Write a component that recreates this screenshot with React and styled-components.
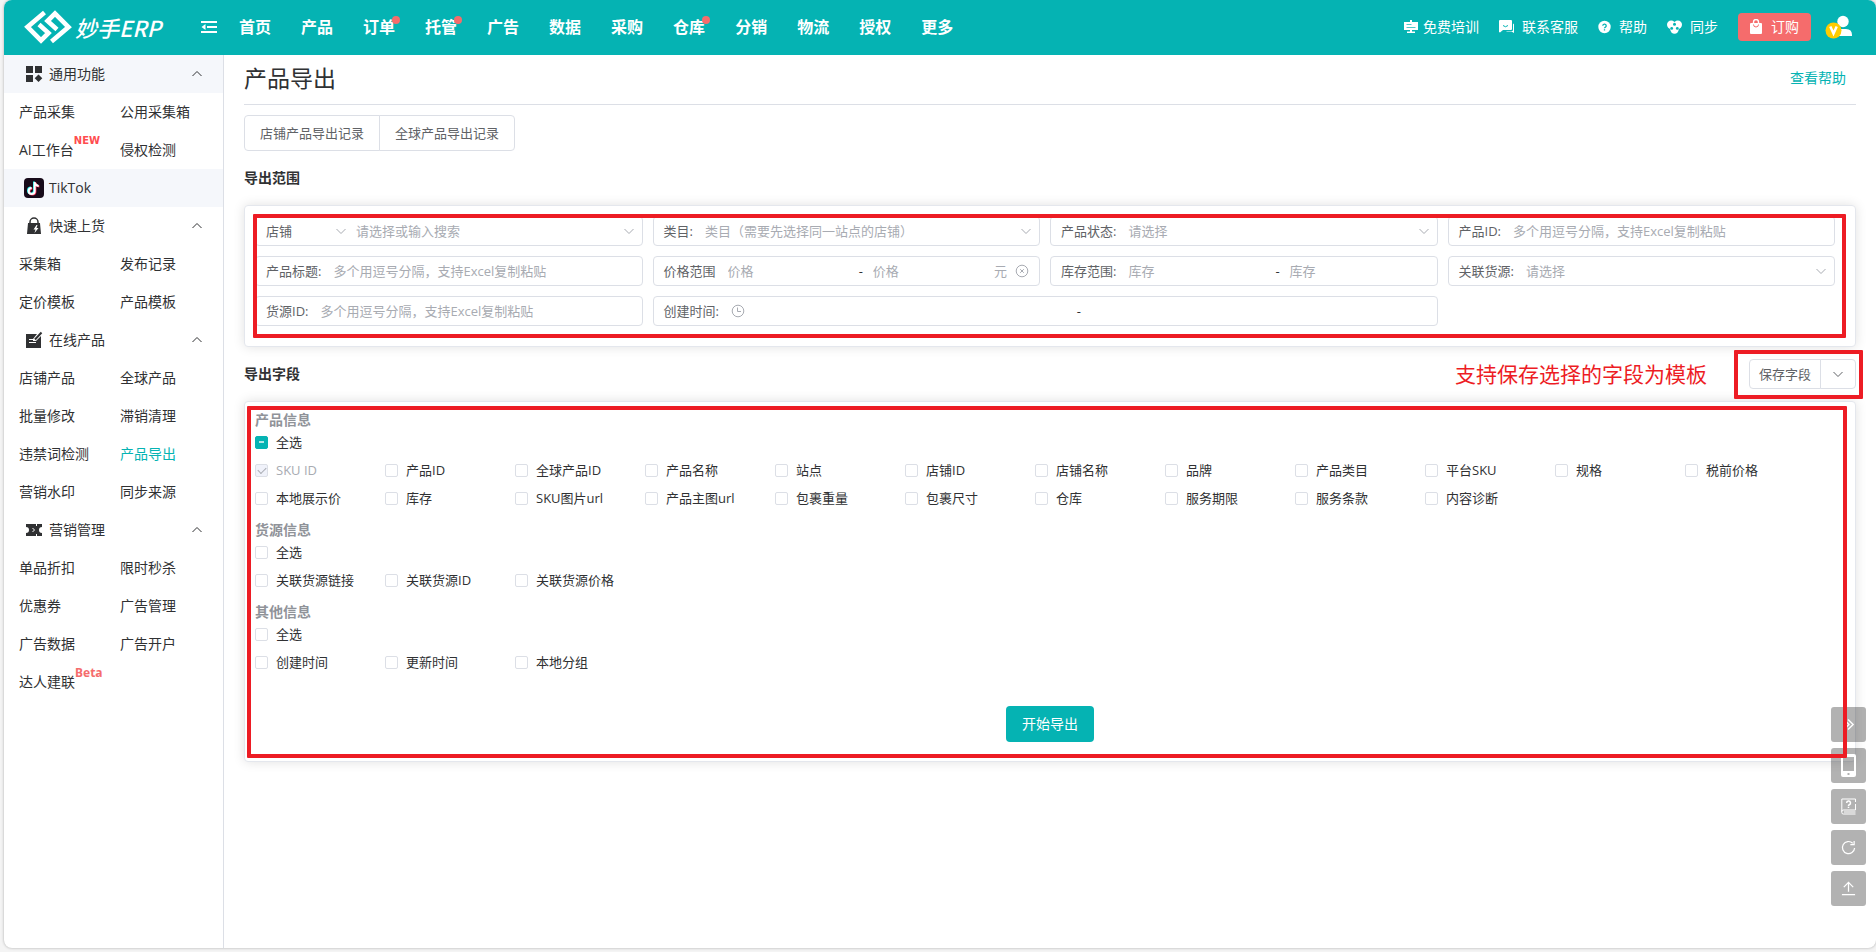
import styled, { createGlobalStyle } from "styled-components";

const GlobalStyle = createGlobalStyle`
  * {
    box-sizing: border-box;
  }
  body {
    margin: 0;
    background-color: #f4f4f4;
    color: #303133;
    font-family: "Open Sans", "Noto Sans CJK SC", sans-serif;
    font-size: 14px;
    line-height: 20px;
  }
  button, input, select {
    font-family: inherit;
    line-height: inherit;
  }
  a {
    color: inherit;
    text-decoration: none;
  }
`;

const Window = styled.div`
  display: flex;
  flex-direction: column;
  min-height: calc(100vh - 4px);
  margin: 0 0 4px 4px;
  background-color: #fff;
  border-radius: 8px;
  box-shadow: 0 0 3px rgba(0, 0, 0, 0.3);
  overflow: hidden;
`;

// header

const Header = styled.header`
  display: flex;
  align-items: center;
  height: 55px;
  padding: 0 23px 1px 20px;
  background-color: #05b3b3;
  color: #fff;
`;

const Logo = styled.a`
  display: flex;
  align-items: center;
  gap: 3px;
  width: 177px;
  font-size: 22px;
  font-style: italic;
  font-weight: 500;
  line-height: 32px;
  font-family: "Noto Sans CJK SC", sans-serif;
`;

const MenuButton = styled.button`
  display: flex;
  width: 16px;
  padding: 0;
  border: none;
  background: none;
  color: #fff;
  cursor: pointer;
`;

const Nav = styled.nav`
  display: flex;
  gap: 30px;
  margin-left: 22px;
  font-size: 16px;
  font-weight: 700;
  line-height: 22px;
`;

const NavLink = styled.a`
  position: relative;
  &::after {
    content: "";
    display: ${(props) => (props.$dot ? "block" : "none")};
    position: absolute;
    top: 0;
    right: -5px;
    width: 8px;
    height: 8px;
    border-radius: 50%;
    background-color: #f56c6c;
  }
`;

const Tools = styled.div`
  display: flex;
  align-items: center;
  gap: 20px;
  margin-left: auto;
`;

const ToolLink = styled.a`
  display: flex;
  align-items: center;
  gap: ${(props) => props.$gap || 8}px;
`;

const OrderButton = styled.button`
  display: flex;
  align-items: center;
  gap: 9px;
  height: 28px;
  padding: 0 12px;
  border: none;
  border-radius: 4px;
  background-color: #f56c6c;
  color: #fff;
  font-size: 14px;
  cursor: pointer;
`;

const AvatarButton = styled.button`
  display: flex;
  margin-left: -6px;
  padding: 0;
  border: none;
  background: none;
  cursor: pointer;
`;

// sidebar

const Body = styled.div`
  display: flex;
  flex: 1;
`;

const Sidebar = styled.aside`
  flex: none;
  width: 220px;
  border-right: 1px solid #dcdfe6;
`;

const SectionTitle = styled.button`
  display: flex;
  align-items: center;
  gap: 5px;
  width: 100%;
  height: 38px;
  padding: 0 20px;
  border: none;
  background-color: ${(props) => (props.$shaded ? "#f5f7fb" : "transparent")};
  color: #303133;
  font-size: 14px;
  text-align: left;
  cursor: pointer;
  span {
    flex: 1;
  }
`;

const SectionLinks = styled.div`
  display: grid;
  grid-template-columns: 101px 1fr;
  padding-left: 15px;
`;

const SideLink = styled.a`
  justify-self: start;
  position: relative;
  line-height: 38px;
  color: ${(props) => (props.$active ? "#05b3b3" : "#303133")};
`;

const Badge = styled.sup`
  position: absolute;
  left: 100%;
  top: 5px;
  color: ${(props) => (props.$small ? "#ff4d4f" : "#f56c6c")};
  font-family: ${(props) =>
    props.$small ? '"DejaVu Sans"' : '"Noto Sans"'}, sans-serif;
  font-size: ${(props) => (props.$small ? 10 : 12)}px;
  font-weight: 700;
  line-height: 10px;
`;

// page

const Main = styled.main`
  flex: 1;
  min-width: 0;
  padding: 0 20px;
`;

const TitleRow = styled.div`
  display: flex;
  align-items: center;
  justify-content: space-between;
  height: 50px;
  padding: 0 10px 3px 0;
  border-bottom: 1px solid #dcdfe6;
  h1 {
    margin: 0;
    font-size: 23px;
    font-weight: 400;
    line-height: 32px;
  }
  a {
    color: #05b3b3;
  }
`;

const RecordButtons = styled.div`
  display: flex;
  margin-top: 10px;
`;

const PlainButton = styled.button`
  display: flex;
  align-items: center;
  justify-content: center;
  min-width: 36px;
  height: ${(props) => (props.$small ? 30 : 36)}px;
  padding: 0 ${(props) => (props.$small ? 9 : 15)}px;
  border: 1px solid #dcdfe6;
  background-color: #fff;
  color: #606266;
  font-size: 13px;
  cursor: pointer;
  &:first-of-type {
    border-radius: 4px 0 0 4px;
  }
  &:last-of-type {
    margin-left: -1px;
    border-radius: 0 4px 4px 0;
  }
`;

const HeadingRow = styled.div`
  display: flex;
  align-items: center;
  justify-content: space-between;
  height: 54px;
  h2 {
    margin: 0;
    font-size: 14px;
    font-weight: 700;
    line-height: 20px;
  }
`;

const Card = styled.section`
  position: relative;
  padding: 10px;
  border: 1px solid #e4e7ed;
  border-radius: 4px;
  background-color: #fff;
  box-shadow: 0 0 12px rgba(0, 0, 0, 0.12);
`;

// red frame lying over the part it points out
const Mark = styled.div`
  position: absolute;
  inset: ${(props) => props.$inset};
  z-index: 10;
  border: 4px solid #ed1c24;
  border-radius: 1px;
  pointer-events: none;
`;

const SaveArea = styled.div`
  display: flex;
  align-items: center;
  gap: 42px;
`;

const Note = styled.strong`
  color: #ed1c24;
  font-size: 21px;
  font-weight: 400;
  line-height: 30px;
`;

const SaveButtons = styled.div`
  display: flex;
  position: relative;
`;

// filters

const FilterGrid = styled.div`
  display: grid;
  grid-template-columns: repeat(4, 1fr);
  gap: 10px;
  padding: 0 10px 10px 0;
`;

const Field = styled.div`
  display: flex;
  align-items: center;
  grid-column: span ${(props) => props.$span || 1};
  min-width: 0;
  height: 30px;
  padding: 0 ${(props) => (props.$select ? 7 : 10)}px 0 10px;
  border: 1px solid #dcdfe6;
  border-radius: 4px;
  color: #606266;
  font-size: 13px;
  label {
    flex: none;
    margin-right: 12px;
  }
  svg {
    flex: none;
    color: #a8abb2;
  }
`;

const TextInput = styled.input`
  flex: 1;
  min-width: 0;
  padding: 0;
  border: none;
  outline: none;
  background: none;
  font-size: 13px;
  color: #606266;
  &::placeholder {
    color: #a8abb2;
  }
`;

const DateBox = styled.div`
  display: flex;
  flex: 1;
  align-items: center;
  min-width: 0;
`;

const Select = styled.select`
  flex: ${(props) => (props.$width ? "none" : 1)};
  width: ${(props) => (props.$width ? `${props.$width}px` : "auto")};
  min-width: 0;
  padding: 0;
  border: none;
  outline: none;
  appearance: none;
  background: none;
  font-size: 13px;
  color: ${(props) => (props.$width ? "#606266" : "#a8abb2")};
`;

const Dash = styled.span`
  flex: none;
  width: 24px;
  color: #303133;
  text-align: center;
`;

const Unit = styled.span`
  margin-right: 8px;
  color: #a8abb2;
`;

const ShopGap = styled.span`
  width: 9px;
`;

// export fields

const Group = styled.div`
  margin-bottom: 10px;
  h3 {
    margin: 0;
    color: #909399;
    font-size: 14px;
    font-weight: 700;
    line-height: 16px;
  }
`;

const CheckList = styled.div`
  display: flex;
  flex-wrap: wrap;
`;

const CheckLabel = styled.label`
  display: flex;
  align-items: center;
  gap: 8px;
  width: 130px;
  height: 28px;
  color: ${(props) => (props.$disabled ? "#a8abb2" : "#303133")};
  font-size: 13px;
  line-height: 20px;
  white-space: nowrap;
`;

const CheckBox = styled.input`
  display: grid;
  place-items: center;
  flex: none;
  appearance: none;
  width: 13px;
  height: 13px;
  margin: 0;
  border: 1px solid #dcdfe6;
  border-radius: 2px;
  background-color: #fff;
  &:disabled {
    background-color: #f0f2fa;
  }
  &:checked::after {
    content: "";
    width: 7px;
    height: 4px;
    margin-top: -2px;
    border: solid #a8abb2;
    border-width: 0 0 1px 1px;
    transform: rotate(-45deg);
  }
  &:indeterminate {
    border-color: #05b3b3;
    background-color: #05b3b3;
  }
  &:indeterminate::after {
    content: "";
    width: 5px;
    height: 2px;
    background-color: #b4e6e6;
  }
`;

const SubmitRow = styled.div`
  display: flex;
  justify-content: center;
  padding: 20px 0 9px;
`;

const SubmitButton = styled.button`
  width: 88px;
  height: 36px;
  padding: 0;
  border: none;
  border-radius: 4px;
  background-color: #05b3b3;
  color: #fff;
  font-size: 14px;
  cursor: pointer;
`;

const FloatBar = styled.div`
  position: fixed;
  right: 10px;
  bottom: 46px;
  z-index: 5;
  display: flex;
  flex-direction: column;
  gap: 6px;
`;

const FloatButton = styled.button`
  display: grid;
  place-items: center;
  width: 35px;
  height: 35px;
  padding: 0;
  border: none;
  border-radius: 3px;
  background-color: rgba(0, 0, 0, 0.3);
  color: #fff;
  cursor: pointer;
`;

// icons

const LogoMark = () => (
  <svg width="48" height="34" viewBox="0 0 48 34" fill="none" stroke="#fff" strokeWidth="4.600">
    <path d="M20.500 2.500 L3.500 17 L17 30.500 L24.500 23 L15 14.500" />
    <path d="M27.500 31.500 L44.500 17 L31 3.500 L23.500 11 L33 19.500" />
  </svg>
);

const FoldIcon = () => (
  <svg width="16" height="14" viewBox="0 0 16 14" fill="currentColor">
    <path d="M0 1h16v2H0zM6 6h10v2H6zM0 11h16v2H0zM4.500 4v6L0.500 7z" />
  </svg>
);

const TrainIcon = () => (
  <svg width="14" height="14" viewBox="0 0 14 14" fill="#fff">
    <path d="M0 2h6V0h2v2h6v8H8v1.500h3V13H3v-1.500h3V10H0z" />
    <path d="M2.500 4.500h5M2.500 7.500h9" stroke="#05b3b3" strokeOpacity="0.7" />
  </svg>
);

const ChatIcon = () => (
  <svg width="15" height="14" viewBox="0 0 15 14" fill="#fff">
    <path d="M1 0h11a1 1 0 0 1 1 1v8a1 1 0 0 1-1 1H4l-3 2.500L0 12V1a1 1 0 0 1 1-1z" />
    <path d="M14 3.500q1 .3 1 1V13l-2.500-1.500H7L8 11h5q1 0 1-1z" />
    <path d="M4 5.500q2.500 2.500 5 0" fill="none" stroke="#05b3b3" />
  </svg>
);

const HelpIcon = () => (
  <svg width="13" height="14" viewBox="0 0 13 14">
    <circle cx="6.500" cy="7" r="6.200" fill="#fff" />
    <path d="M4.800 5.700a1.700 1.700 0 1 1 2.400 1.600q-.7.400-.7 1M6.500 9.200v1.300" fill="none" stroke="#05b3b3" strokeWidth="1.300" />
  </svg>
);

const SyncIcon = () => (
  <svg width="15" height="14" viewBox="0 0 15 14" fill="#fff">
    <circle cx="4.200" cy="4.800" r="4.200" />
    <circle cx="10.800" cy="4.800" r="4.200" />
    <circle cx="7.500" cy="9.500" r="4.200" />
    <circle cx="7.500" cy="4.200" r="1.500" fill="#05b3b3" />
    <circle cx="4.700" cy="8.400" r="1.400" fill="#05b3b3" />
    <circle cx="10.300" cy="8.400" r="1.400" fill="#05b3b3" />
  </svg>
);

const BagIcon = () => (
  <svg width="12" height="16" viewBox="0 0 12 16">
    <path d="M1 4h10q1 0 1 1v9q0 1-1 1H1q-1 0-1-1V5q0-1 1-1z" fill="#fff" />
    <path d="M3.500 4V3a2.500 2.500 0 0 1 5 0v1" fill="none" stroke="#fff" strokeWidth="1.400" />
    <path d="M3.500 5.500a2.500 2.500 0 0 0 5 0" fill="none" stroke="#f56c6c" />
  </svg>
);

const AvatarIcon = () => (
  <svg width="28" height="24" viewBox="0 0 28 24">
    <circle cx="18" cy="6.500" r="5.700" fill="#fff" />
    <path d="M9 21v-1q0-6 6-6h6q6 0 6 6v1z" fill="#fff" />
    <circle cx="8.500" cy="15.500" r="8" fill="#fc0" />
    <path d="M5.300 11.500L8.500 18.500l3.200-7" fill="none" stroke="#fff" strokeWidth="2.500" />
  </svg>
);

const SectionIcon = ({ children }) => (
  <svg width="20" height="20" viewBox="0 0 20 20" fill="#303133">
    {children}
  </svg>
);

const GridIcon = () => (
  <SectionIcon>
    <path d="M2 2h7v7H2zM11 2h7v7h-7zM2 11h7v7H2zM14.500 10.500l3.800 3.800-3.800 3.800-3.800-3.800z" />
  </SectionIcon>
);

const TiktokIcon = () => (
  <svg width="20" height="20" viewBox="0 0 20 20" fill="none" strokeWidth="2">
    <rect width="20" height="20" rx="4" fill="#170b1a" />
    <path d="M10 3.500v9a3 3 0 1 1-3-3M10 3.500q.4 3.600 4 4" stroke="#25f4ee" />
    <path d="M11.400 4.500v9a3 3 0 1 1-3-3M11.400 4.500q.4 3.600 4 4" stroke="#fe2c55" />
    <path d="M10.700 4v9a3 3 0 1 1-3-3M10.700 4q.4 3.600 4 4" stroke="#fff" />
  </svg>
);

const QuickIcon = () => (
  <SectionIcon>
    <path d="M4 7h12l1 11H3z" />
    <path d="M6 7V6a4 4 0 0 1 8 0v1" fill="none" stroke="#303133" strokeWidth="1.500" />
    <path d="M12.500 9l-3 4.500h2l-1 3.500 4-5h-2l1-3z" fill="#fff" />
  </SectionIcon>
);

const OnlineIcon = () => (
  <SectionIcon>
    <path d="M2 4h11l-4 5v2h3l5-5v12H2z" />
    <path d="M17.500 2.500L11 9.500" stroke="#303133" strokeWidth="2" />
    <path d="M5 9.500h4M5 12.500h7" stroke="#fff" />
  </SectionIcon>
);

const TicketIcon = () => (
  <SectionIcon>
    <path d="M2 4h16v3a3 3 0 0 0 0 6v3H2v-3a3 3 0 0 0 0-6z" />
    <path d="M12.500 4v2M12.500 14v2M8.500 8l2 2-2 2" fill="none" stroke="#fff" />
  </SectionIcon>
);

const Chevron = ({ up }) => (
  <svg width="12" height="12" viewBox="0 0 12 12" fill="none" stroke="currentColor">
    <path d={up ? "M1.500 8l4.500-4.500L10.500 8" : "M1.500 4L6 8.500 10.500 4"} />
  </svg>
);

const ClearIcon = () => (
  <svg width="14" height="14" viewBox="0 0 14 14" fill="none" stroke="currentColor">
    <circle cx="7" cy="7" r="5.800" />
    <path d="M5.200 5.200l3.600 3.600M8.800 5.200l-3.600 3.600" />
  </svg>
);

const ClockIcon = () => (
  <svg width="14" height="14" viewBox="0 0 14 14" fill="none" stroke="currentColor">
    <circle cx="7" cy="7" r="5.800" />
    <path d="M6.500 3.500v4h3.500" />
  </svg>
);

const floatIcons = [
  {
    name: "收起",
    icon: (
      <svg width="13" height="13" viewBox="0 0 14 14" fill="none" stroke="currentColor" strokeWidth="1.500">
        <path d="M2 1.500L7.500 7 2 12.500M6.500 1.500L12 7l-5.500 5.500" />
      </svg>
    ),
  },
  {
    name: "手机版",
    icon: (
      <svg width="15" height="23" viewBox="0 0 15 23">
        <path
          d="M2 0h11q2 0 2 2v19q0 2-2 2H2q-2 0-2-2V2q0-2 2-2zM2 3v14h11V3zM6.500 19v2h2v-2z"
          fill="currentColor"
          fillRule="evenodd"
        />
      </svg>
    ),
  },
  {
    name: "帮助手册",
    icon: (
      <svg width="15" height="17" viewBox="0 0 15 17" fill="none" stroke="currentColor">
        <path d="M14.500 4V1H.8v13.500q0 1.500 1.500 1.500h12.200M14.500 6v6H2.300Q.8 12 .8 13.500M3 14h11.500" />
        <path d="M5.700 5a1.900 1.900 0 1 1 2.600 1.700q-.8.400-.8 1.200M7.500 8.700V10" strokeWidth="1.500" />
      </svg>
    ),
  },
  {
    name: "刷新",
    icon: (
      <svg width="15" height="15" viewBox="0 0 16 16" fill="none" stroke="currentColor" strokeWidth="1.300">
        <path d="M14.500 8.500A6.500 6.500 0 1 1 12.500 3.400M14 1v4h-4" />
      </svg>
    ),
  },
  {
    name: "回到顶部",
    icon: (
      <svg width="15" height="15" viewBox="0 0 16 16" fill="none" stroke="currentColor" strokeWidth="1.300">
        <path d="M8 11.500V2M3 6.500l5-5 5 5M1 14.500h14" />
      </svg>
    ),
  },
];

const navItems = [
  { text: "首页" },
  { text: "产品" },
  { text: "订单", dot: true },
  { text: "托管", dot: true },
  { text: "广告" },
  { text: "数据" },
  { text: "采购" },
  { text: "仓库", dot: true },
  { text: "分销" },
  { text: "物流" },
  { text: "授权" },
  { text: "更多" },
];

const sections = [
  {
    title: "通用功能",
    icon: <GridIcon />,
    shaded: true,
    links: ["产品采集", "公用采集箱", "AI工作台", "侵权检测"],
  },
  { title: "TikTok", icon: <TiktokIcon />, shaded: true, links: [] },
  {
    title: "快速上货",
    icon: <QuickIcon />,
    links: ["采集箱", "发布记录", "定价模板", "产品模板"],
  },
  {
    title: "在线产品",
    icon: <OnlineIcon />,
    links: [
      "店铺产品",
      "全球产品",
      "批量修改",
      "滞销清理",
      "违禁词检测",
      "产品导出",
      "营销水印",
      "同步来源",
    ],
  },
  {
    title: "营销管理",
    icon: <TicketIcon />,
    links: [
      "单品折扣",
      "限时秒杀",
      "优惠券",
      "广告管理",
      "广告数据",
      "广告开户",
      "达人建联",
    ],
  },
];

const groups = [
  {
    title: "产品信息",
    partly: true,
    fields: [
      "SKU ID",
      "产品ID",
      "全球产品ID",
      "产品名称",
      "站点",
      "店铺ID",
      "店铺名称",
      "品牌",
      "产品类目",
      "平台SKU",
      "规格",
      "税前价格",
      "本地展示价",
      "库存",
      "SKU图片url",
      "产品主图url",
      "包裹重量",
      "包裹尺寸",
      "仓库",
      "服务期限",
      "服务条款",
      "内容诊断",
    ],
  },
  { title: "货源信息", fields: ["关联货源链接", "关联货源ID", "关联货源价格"] },
  { title: "其他信息", fields: ["创建时间", "更新时间", "本地分组"] },
];

const listHint = "多个用逗号分隔，支持Excel复制粘贴";

const TextField = ({ id, label }) => (
  <Field>
    <label htmlFor={id}>{label}</label>
    <TextInput id={id} type="text" placeholder={listHint} />
  </Field>
);

const SelectField = ({ id, label, hint }) => (
  <Field $select>
    <label htmlFor={id}>{label}</label>
    <Select id={id}>
      <option>{hint}</option>
    </Select>
    <Chevron />
  </Field>
);

const Filters = () => (
  <FilterGrid>
    <Field $select>
      <Select $width={69} aria-label="店铺类型">
        <option>店铺</option>
      </Select>
      <Chevron />
      <ShopGap />
      <Select aria-label="店铺">
        <option>请选择或输入搜索</option>
      </Select>
      <Chevron />
    </Field>
    <SelectField id="category" label="类目:" hint="类目（需要先选择同一站点的店铺）" />
    <SelectField id="status" label="产品状态:" hint="请选择" />
    <TextField id="productId" label="产品ID:" />
    <TextField id="productTitle" label="产品标题:" />
    <Field>
      <label htmlFor="priceFrom">价格范围</label>
      <TextInput id="priceFrom" type="text" placeholder="价格" />
      <Dash>-</Dash>
      <TextInput aria-label="最高价格" type="text" placeholder="价格" />
      <Unit>元</Unit>
      <ClearIcon />
    </Field>
    <Field>
      <label htmlFor="stockFrom">库存范围:</label>
      <TextInput id="stockFrom" type="text" placeholder="库存" />
      <Dash>-</Dash>
      <TextInput aria-label="最高库存" type="text" placeholder="库存" />
    </Field>
    <SelectField id="source" label="关联货源:" hint="请选择" />
    <TextField id="sourceId" label="货源ID:" />
    <Field $span={2}>
      <label htmlFor="dateFrom">创建时间:</label>
      <DateBox>
        <ClockIcon />
        <TextInput id="dateFrom" type="text" />
      </DateBox>
      <Dash>-</Dash>
      <DateBox>
        <TextInput aria-label="结束时间" type="text" />
      </DateBox>
    </Field>
  </FilterGrid>
);

const CheckGroup = ({ title, partly, fields }) => (
  <Group>
    <h3>{title}</h3>
    <CheckLabel>
      <CheckBox
        type="checkbox"
        ref={(el) => {
          if (el) el.indeterminate = Boolean(partly);
        }}
      />
      全选
    </CheckLabel>
    <CheckList>
      {fields.map((field) => {
        const fixed = field === "SKU ID";
        return (
          <CheckLabel key={field} $disabled={fixed}>
            <CheckBox type="checkbox" defaultChecked={fixed} disabled={fixed} />
            {field}
          </CheckLabel>
        );
      })}
    </CheckList>
  </Group>
);

const App = () => {
  return (
    <>
      <GlobalStyle />
      <Window>
        <Header>
          <Logo href="#">
            <LogoMark />
            妙手ERP
          </Logo>
          <MenuButton aria-label="折叠菜单">
            <FoldIcon />
          </MenuButton>
          <Nav>
            {navItems.map((item) => (
              <NavLink key={item.text} href="#" $dot={item.dot}>
                {item.text}
              </NavLink>
            ))}
          </Nav>
          <Tools>
            <ToolLink href="#" $gap={5}>
              <TrainIcon />
              免费培训
            </ToolLink>
            <ToolLink href="#">
              <ChatIcon />
              联系客服
            </ToolLink>
            <ToolLink href="#">
              <HelpIcon />
              帮助
            </ToolLink>
            <ToolLink href="#">
              <SyncIcon />
              同步
            </ToolLink>
            <OrderButton>
              <BagIcon />
              订购
            </OrderButton>
            <AvatarButton aria-label="账号">
              <AvatarIcon />
            </AvatarButton>
          </Tools>
        </Header>
        <Body>
          <Sidebar>
            {sections.map((section) => (
              <div key={section.title}>
                <SectionTitle $shaded={section.shaded}>
                  {section.icon}
                  <span>{section.title}</span>
                  {section.links.length > 0 && <Chevron up />}
                </SectionTitle>
                <SectionLinks>
                  {section.links.map((link) => (
                    <SideLink key={link} href="#" $active={link === "产品导出"}>
                      {link}
                      {link === "AI工作台" && <Badge $small>NEW</Badge>}
                      {link === "达人建联" && <Badge>Beta</Badge>}
                    </SideLink>
                  ))}
                </SectionLinks>
              </div>
            ))}
          </Sidebar>
          <Main>
            <TitleRow>
              <h1>产品导出</h1>
              <a href="#">查看帮助</a>
            </TitleRow>
            <RecordButtons>
              <PlainButton>店铺产品导出记录</PlainButton>
              <PlainButton>全球产品导出记录</PlainButton>
            </RecordButtons>
            <HeadingRow>
              <h2>导出范围</h2>
            </HeadingRow>
            <Card>
              <Filters />
              <Mark $inset="8px 9px 8px 8px" />
            </Card>
            <HeadingRow>
              <h2>导出字段</h2>
              <SaveArea>
                <Note>支持保存选择的字段为模板</Note>
                <SaveButtons>
                  <PlainButton $small>保存字段</PlainButton>
                  <PlainButton $small aria-label="更多模板">
                    <Chevron />
                  </PlainButton>
                  <Mark $inset="-9px -7px -10px -15px" />
                </SaveButtons>
              </SaveArea>
            </HeadingRow>
            <Card>
              {groups.map((group) => (
                <CheckGroup key={group.title} {...group} />
              ))}
              <SubmitRow>
                <SubmitButton>开始导出</SubmitButton>
              </SubmitRow>
              <Mark $inset="4px 8px 3px 2px" />
            </Card>
          </Main>
        </Body>
      </Window>
      <FloatBar>
        {floatIcons.map((item) => (
          <FloatButton key={item.name} aria-label={item.name}>
            {item.icon}
          </FloatButton>
        ))}
      </FloatBar>
    </>
  );
};

export default App;
